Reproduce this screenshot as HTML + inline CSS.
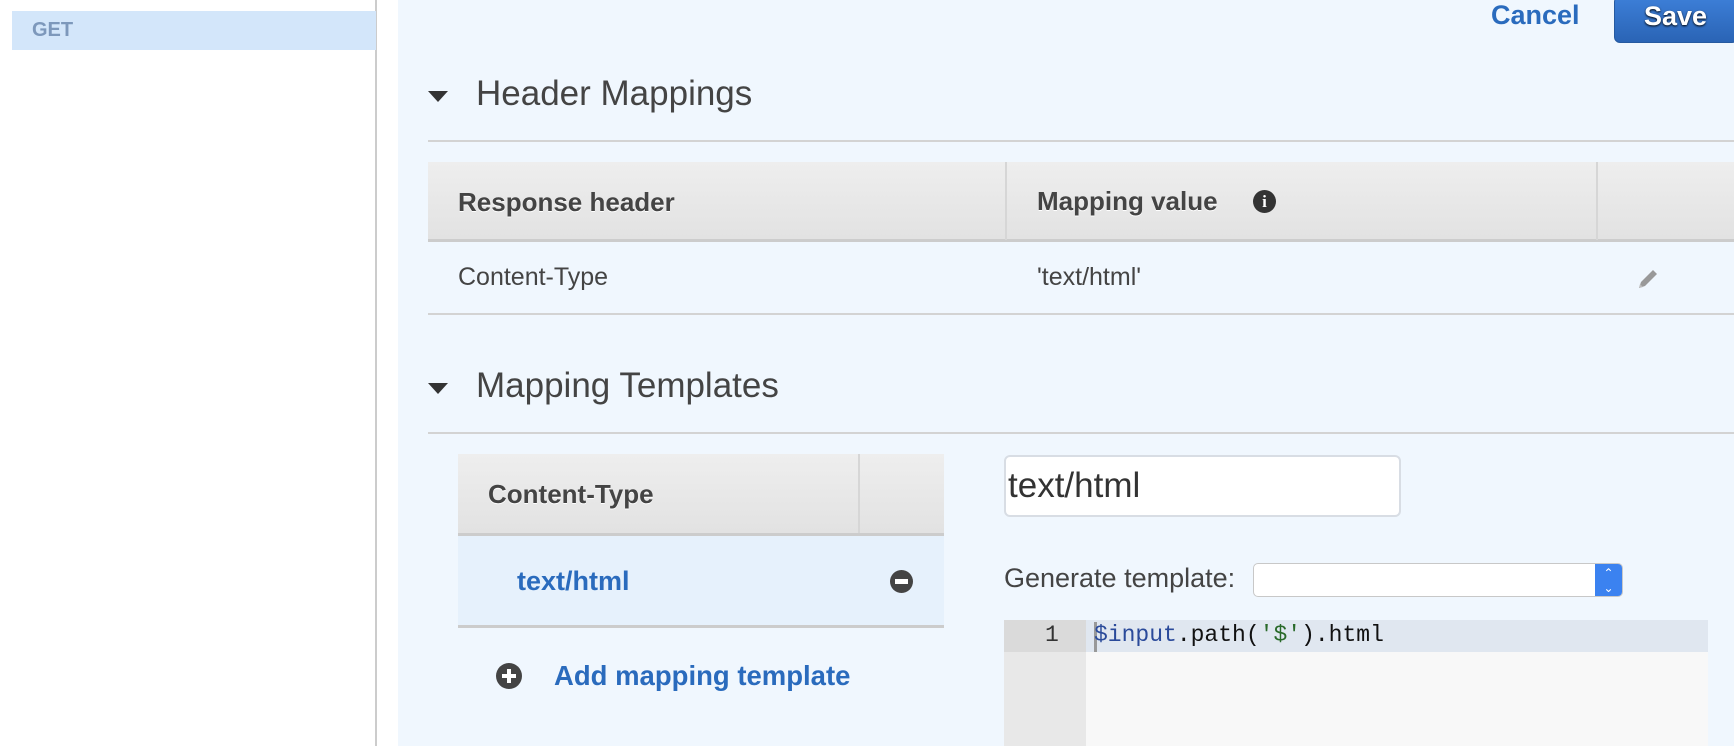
<!DOCTYPE html>
<html><head><meta charset="utf-8"><style>
*{box-sizing:border-box;margin:0;padding:0}
body{width:1734px;height:746px;overflow:hidden;background:#fff;font-family:"Liberation Sans",Arial,sans-serif;position:relative;color:#444}
.abs{position:absolute}
.side{left:0;top:0;width:377px;height:746px;border-right:2px solid #ccc;background:#fff}
.get{left:12px;top:11px;width:364px;height:39px;background:#d3e6fa;color:#7d98bb;font-weight:bold;font-size:20px;padding:8px 0 0 20px}
.main{left:398px;top:0;width:1336px;height:746px;background:#f0f7fe}
.h{font-size:35px;color:#444}
.tri{width:0;height:0;border-left:10px solid transparent;border-right:10px solid transparent;border-top:11px solid #333}
.line{height:2px;background:#d3d3d3}
.th{background:linear-gradient(#eee,#e2e2e2);border-bottom:3px solid #ccc}
.b{font-weight:bold;font-size:26px;color:#444;text-shadow:0 1px 0 #fff}
.t{font-size:25px;color:#444}
.blue{color:#2a6bbd;font-weight:bold}
</style></head><body>
<div class="abs side"></div>
<div class="abs get">GET</div>
<div class="abs main"></div>
<div class="abs blue" style="left:1491px;top:0px;font-size:27px">Cancel</div>
<div class="abs" style="left:1614px;top:-4px;width:124px;height:47px;background:linear-gradient(#3d7fd8,#2a64b5);border:1px solid #265aa0;border-radius:6px;color:#fff;font-weight:bold;font-size:27px;padding:4px 0 0 29px;text-shadow:0 1px 2px #000">Save</div>

<div class="abs tri" style="left:428px;top:91px"></div>
<div class="abs h" style="left:476px;top:74px">Header Mappings</div>
<div class="abs line" style="left:428px;top:140px;width:1306px"></div>

<div class="abs th" style="left:428px;top:162px;width:1306px;height:80px"></div>
<div class="abs" style="left:1005px;top:162px;width:2px;height:78px;background:#d6d6d6"></div>
<div class="abs" style="left:1596px;top:162px;width:2px;height:78px;background:#d6d6d6"></div>
<div class="abs b" style="left:458px;top:187px">Response header</div>
<div class="abs b" style="left:1037px;top:186px">Mapping value</div>
<div class="abs" style="left:1253px;top:190px;width:23px;height:23px;border-radius:50%;background:#333;color:#fff;font-weight:bold;font-size:17px;text-align:center;line-height:23px;font-family:'Liberation Serif',serif">i</div>
<div class="abs t" style="left:458px;top:263px">Content-Type</div>
<div class="abs t" style="left:1037px;top:263px">'text/html'</div>
<svg class="abs" style="left:1635px;top:266px" width="26" height="26" viewBox="0 0 26 26"><path d="M4 22 L6 16 L18 4 L22 8 L10 20 Z" fill="#999"/><path d="M4 22 L5 18 L8 21 Z" fill="#bbb"/></svg>
<div class="abs line" style="left:428px;top:313px;width:1306px"></div>

<div class="abs tri" style="left:428px;top:383px"></div>
<div class="abs h" style="left:476px;top:366px">Mapping Templates</div>
<div class="abs line" style="left:428px;top:432px;width:1306px"></div>

<div class="abs th" style="left:458px;top:454px;width:486px;height:82px"></div>
<div class="abs" style="left:858px;top:454px;width:2px;height:79px;background:#d6d6d6"></div>
<div class="abs b" style="left:488px;top:479px">Content-Type</div>
<div class="abs" style="left:458px;top:536px;width:486px;height:92px;background:#e6f1fc;border-bottom:3px solid #ccc"></div>
<div class="abs blue" style="left:517px;top:566px;font-size:27px">text/html</div>
<div class="abs" style="left:890px;top:570px;width:23px;height:23px;border-radius:50%;background:#444"><div style="position:absolute;left:5px;top:9px;width:13px;height:5px;background:#fff"></div></div>
<div class="abs" style="left:496px;top:663px;width:26px;height:26px;border-radius:50%;background:#444"><div style="position:absolute;left:6px;top:11px;width:14px;height:4px;background:#fff"></div><div style="position:absolute;left:11px;top:6px;width:4px;height:14px;background:#fff"></div></div>
<div class="abs blue" style="left:554px;top:660px;font-size:27.5px">Add mapping template</div>

<div class="abs" style="left:1004px;top:455px;width:397px;height:62px;background:#fff;border:2px solid #d8dde4;border-radius:6px;font-size:35px;color:#333;padding:9px 0 0 2px">text/html</div>
<div class="abs t" style="left:1004px;top:563px;font-size:27px">Generate template:</div>
<div class="abs" style="left:1253px;top:563px;width:370px;height:34px;background:#fff;border:1px solid #c8c8c8;border-radius:5px;overflow:hidden"><div style="position:absolute;right:0;top:0;width:27px;height:34px;background:#3b82f0;color:#fff;font-size:12px;text-align:center;line-height:15px;padding-top:2px">&#8963;<br>&#8964;</div></div>
<div class="abs" style="left:1004px;top:620px;width:704px;height:126px;background:#f8f8f8"></div>
<div class="abs" style="left:1004px;top:620px;width:82px;height:126px;background:#e8e8e8"></div>
<div class="abs" style="left:1004px;top:620px;width:704px;height:32px;background:#e0e7f0"></div>
<div class="abs" style="left:1004px;top:620px;width:82px;height:32px;background:#dadada"></div>
<div class="abs" style="left:1045px;top:622px;font-family:'Liberation Mono',monospace;font-size:23px;color:#333">1</div>
<div class="abs" style="left:1094px;top:622px;width:3px;height:30px;background:#999"></div>
<div class="abs" style="left:1094px;top:622px;font-family:'Liberation Mono',monospace;font-size:23px;color:#111"><span style="color:#2a4a9a">$input</span>.path(<span style="color:#2a6a2a">'$'</span>).html</div>
</body></html>
